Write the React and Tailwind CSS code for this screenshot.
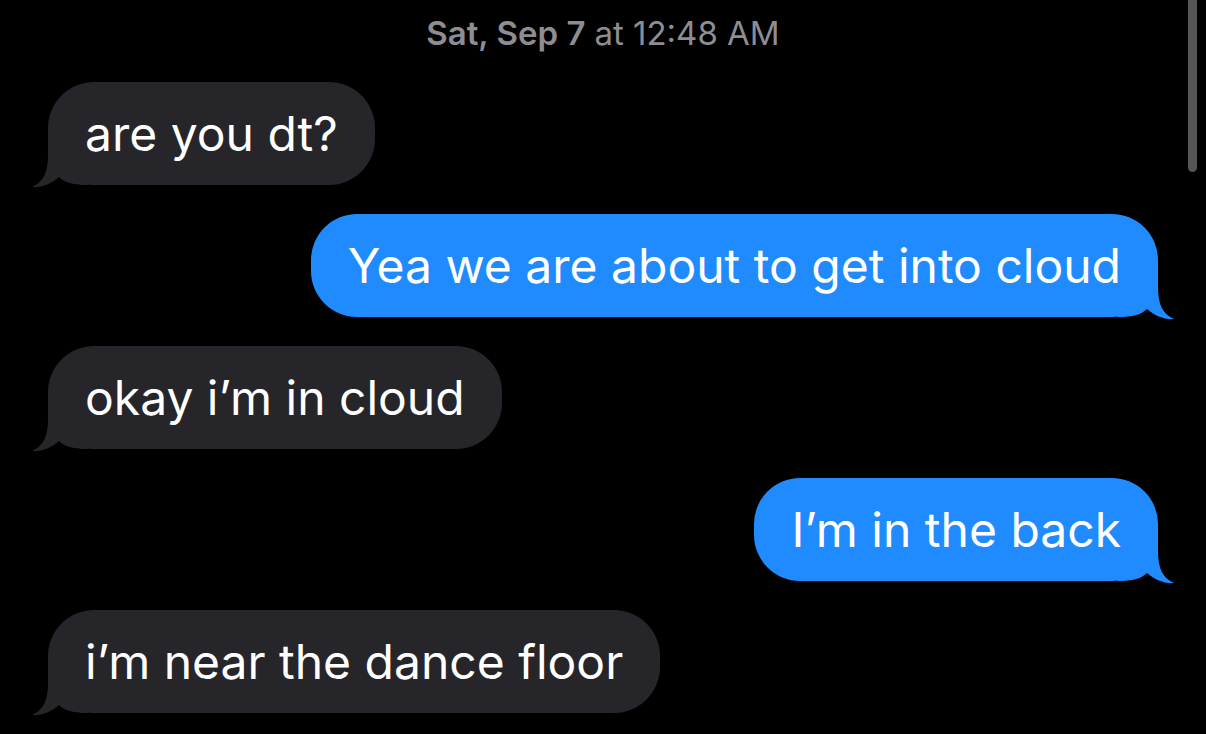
const messages = [
  { from: "them", text: "are you dt?" },
  { from: "me", text: "Yea we are about to get into cloud" },
  { from: "them", text: "okay i’m in cloud" },
  { from: "me", text: "I’m in the back" },
  { from: "them", text: "i’m near the dance floor" },
];

const Tail = ({ side, color }) => (
  <svg
    viewBox="-16 -50 56 53"
    width="56"
    height="53"
    className={
      side === "left"
        ? "absolute left-[-16px] bottom-[-3px]"
        : "absolute right-[-16px] bottom-[-3px] -scale-x-100"
    }
  >
    <path
      d="M0,-50 L0,-30 C0,-12 -5,-3 -16,2 C-7,3 3,-1 11,-8 C17,-2 26,0 40,0 L40,-50 Z"
      fill={color}
    />
  </svg>
);

const Bubble = ({ from, text }) => {
  const mine = from === "me";
  return (
    <div className={`flex ${mine ? "justify-end" : "justify-start"}`}>
      <div
        className={`relative h-[103px] flex items-center px-[37px] rounded-[46px] text-white text-[48px] leading-none ${
          mine ? "bg-[#1f8bfe]" : "bg-[#26252a]"
        }`}
      >
        <Tail side={mine ? "right" : "left"} color={mine ? "#1f8bfe" : "#26252a"} />
        <span className="relative whitespace-nowrap">{text}</span>
      </div>
    </div>
  );
};

export default function App() {
  return (
    <div
      className="relative w-[1206px] h-[734px] overflow-hidden bg-black"
      style={{ fontFamily: "Inter, 'Noto Sans', sans-serif" }}
    >
      <div className="absolute top-0 right-[9px] w-[9px] h-[172px] rounded-b-full bg-[#555557]" />

      <div className="flex flex-col px-[48px] pt-[14px]">
        <div className="h-[40px] flex items-center justify-center text-[33px] text-[#8d8d92]">
          <span className="font-semibold">Sat, Sep 7</span>
          <span className="ml-[9px]">at 12:48 AM</span>
        </div>
        <div className="flex flex-col gap-[29px] mt-[28px]">
          {messages.map((m, i) => (
            <Bubble key={i} from={m.from} text={m.text} />
          ))}
        </div>
      </div>
    </div>
  );
}
